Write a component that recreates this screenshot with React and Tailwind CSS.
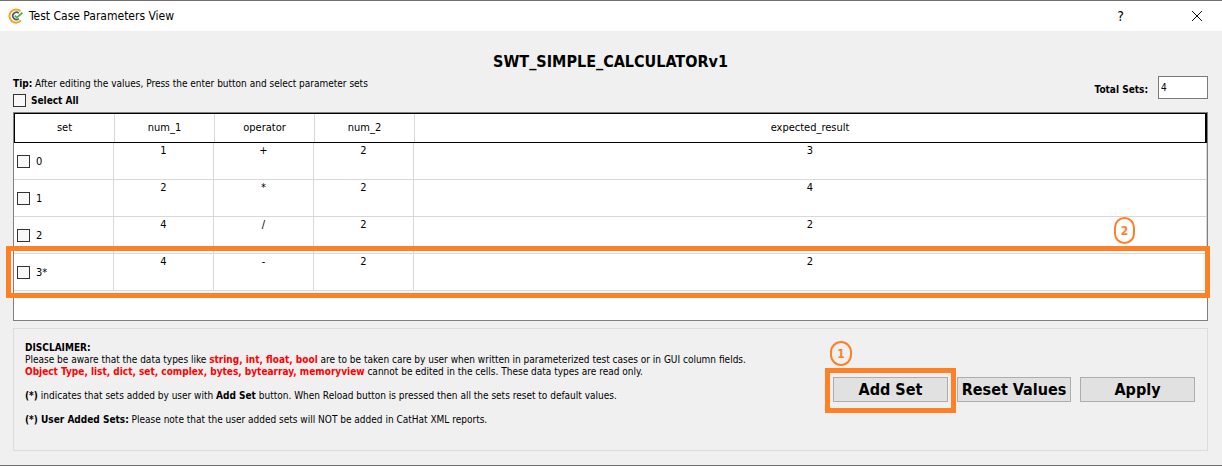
const F = "font-['DejaVu_Sans_Condensed','DejaVu_Sans',sans-serif]";

const cols = ["set", "num_1", "operator", "num_2", "expected_result"];
const rows = [
  ["0", "1", "+", "2", "3"],
  ["1", "2", "*", "2", "4"],
  ["2", "4", "/", "2", "2"],
  ["3*", "4", "-", "2", "2"],
];

function Box({ className = "" }) {
  return <span className={"block w-[13px] h-[13px] border border-[#333333] bg-[#f8f8f8] shrink-0 " + className} />;
}

function Logo() {
  return (
    <svg width="16" height="16" viewBox="0 0 16 16" fill="none">
      <path d="M12.5 3.2A6.6 6.6 0 1 0 13 12.4" stroke="#f5a623" strokeWidth="2" />
      <path d="M10.8 5.2A3.6 3.6 0 1 0 10.8 10.6" stroke="#4a5a6a" strokeWidth="1.6" />
      <path d="M6.8 7.6l2 2L14.4 4.8" stroke="#4caf50" strokeWidth="1.8" />
    </svg>
  );
}

function Row({ r }) {
  return (
    <div className="flex h-[37px] border-b border-[#d8d8d8] text-[11px] text-black">
      <div className="w-[100px] shrink-0 border-r border-[#d8d8d8] flex items-start pl-[3px] pt-[12px] gap-[6px]">
        <Box />
        <span className="leading-[14px]">{r[0]}</span>
      </div>
      {r.slice(1, 4).map((v, i) => (
        <div key={i} className="w-[100px] shrink-0 border-r border-[#d8d8d8] text-center pt-[1px] leading-[14px]">{v}</div>
      ))}
      <div className="flex-1 border-r border-[#d8d8d8] text-center pt-[1px] leading-[14px]">{r[4]}</div>
    </div>
  );
}

export default function App() {
  return (
    <div className={"relative w-[1222px] h-[466px] overflow-hidden bg-[#f0f0f0] flex flex-col border-t border-b border-[#707070] " + F}>
      {/* title bar */}
      <div className="h-[30px] shrink-0 bg-white flex items-center pl-[8px] text-[12px] text-black">
        <Logo />
        <span className="ml-[5px]">Test Case Parameters View</span>
        <span className="ml-auto mr-[67px] text-[14px]">?</span>
        <svg width="12" height="12" viewBox="0 0 12 12" className="mr-[19px]" stroke="#111" strokeWidth="1" fill="none">
          <path d="M1 1L11 11M11 1L1 11" />
        </svg>
      </div>

      {/* body */}
      <div className="flex-1 flex flex-col pl-[13px] pr-[14px]">
        <div className="h-[47px] shrink-0 flex items-end justify-center pb-[6px] text-[16px] font-bold leading-[20px] text-black">
          SWT_SIMPLE_CALCULATORv1
        </div>
        <div className="h-[33px] shrink-0 flex justify-between">
          <div className="flex flex-col">
            <div className="text-[10px] leading-[12px] text-black pt-0">
              <b>Tip:</b> After editing the values, Press the enter button and select parameter sets
            </div>
            <div className="flex items-center gap-[5px] mt-[4px]">
              <Box />
              <b className="text-[10px] leading-[13px] text-black">Select All</b>
            </div>
          </div>
          <div className="flex items-start">
            <b className="text-[10px] text-black mt-[5px] mr-[10px] leading-[13px]">Total Sets:</b>
            <div className="w-[50px] h-[23px] -mt-[2px] border border-[#7a7a7a] bg-white text-[10px] leading-[21px] pl-[2px] text-black">4</div>
          </div>
        </div>

        {/* table */}
        <div className="h-[209px] mt-[1px] shrink-0 border border-[#808080] bg-white">
          <div className="flex h-[30px] border border-black border-r-2 text-[11px] text-black">
            {cols.map((c, i) => (
              <div key={c} className={(i < 4 ? "w-[100px] shrink-0 border-r border-[#d8d8d8] " : "flex-1 ") + "flex items-center justify-center"}>
                {c}
              </div>
            ))}
          </div>
          {rows.map((r) => <Row key={r[0]} r={r} />)}
        </div>

        {/* bottom panel */}
        <div className="mt-[7px] h-[123px] shrink-0 border border-[#dcdcdc] flex">
          <div className="flex-1 pl-[11px] pt-[13px] text-[10px] leading-[12px] text-black">
            <div className="font-bold">DISCLAIMER:</div>
            <div>
              Please be aware that the data types like <b className="text-[#ff0000]">string, int, float, bool</b> are to be taken care by user when written in parameterized test cases or in GUI column fields.
            </div>
            <div>
              <b className="text-[#ff0000]">Object Type, list, dict, set, complex, bytes, bytearray, memoryview</b> cannot be edited in the cells. These data types are read only.
            </div>
            <div className="mt-[12px]">
              <b>(*)</b> indicates that sets added by user with <b>Add Set</b> button. When Reload button is pressed then all the sets reset to default values.
            </div>
            <div className="mt-[12px]">
              <b>(*) User Added Sets:</b> Please note that the user added sets will NOT be added in CatHat XML reports.
            </div>
          </div>
          <div className="flex items-start pt-[48px] pr-[12px] text-[16px] font-bold text-black">
            <div className="w-[115px] h-[25px] bg-[#e1e1e1] border border-[#adadad] flex items-center justify-center">Add Set</div>
            <div className="w-[114px] h-[25px] ml-[9px] bg-[#e1e1e1] border border-[#adadad] flex items-center justify-center">Reset Values</div>
            <div className="w-[115px] h-[25px] ml-[9px] bg-[#e1e1e1] border border-[#adadad] flex items-center justify-center">Apply</div>
          </div>
        </div>
      </div>

      {/* annotations */}
      <div className="absolute left-[6px] top-[245px] w-[1204px] h-[52px] border-[5px] border-[#ff8027]" />
      <div className="absolute left-[825px] top-[367px] w-[131px] h-[45px] border-[5px] border-[#ff8027]" />
      <div className="absolute left-[830px] top-[340px] w-[22px] h-[25px] rounded-full border-2 border-[#ff8027] flex items-center justify-center text-[12px] font-bold text-[#ff8027]">1</div>
      <div className="absolute left-[1114px] top-[216px] w-[21px] h-[27px] rounded-full border-2 border-[#ff8027] flex items-center justify-center text-[12px] font-bold text-[#ff8027]">2</div>
    </div>
  );
}
